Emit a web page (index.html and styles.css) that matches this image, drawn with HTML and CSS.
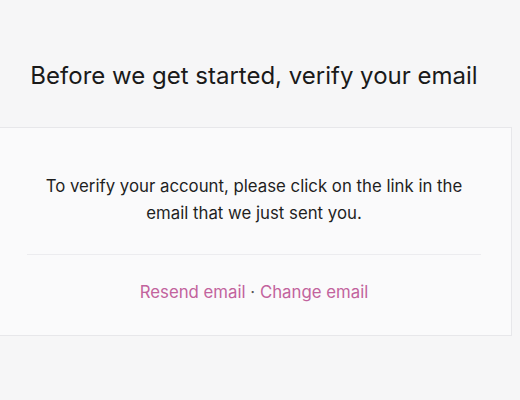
FILE: index.html
```html
<!DOCTYPE html>
<html lang="en">
<head>
<meta charset="utf-8">
<link rel="stylesheet" href="styles.css">
</head>
<body>
<main class="page">
  <h1 class="title">Before we get started, verify your email</h1>
  <section class="card">
    <p class="message">To verify your account, please click on the link in the<br>email that we just sent you.</p>
    <hr class="divider">
    <p class="actions"><a class="link" href="#">Resend email</a> · <a class="link" href="#">Change email</a></p>
  </section>
</main>
</body>
</html>
```
FILE: styles.css
```css
html, body {
  margin: 0;
  padding: 0;
  background: #f6f6f7;
}
body {
  font-family: Inter, "Liberation Sans", sans-serif;
  color: #1e1e1e;
  width: 520px;
  height: 400px;
  overflow: hidden;
}
.page {
  padding-top: 60px;
  width: 516px;
  margin-left: -4px;
}
.title {
  margin: 0 0 35px;
  font-size: 24px;
  line-height: 32px;
  font-weight: 400;
  text-align: center;
  color: #1a1a1a;
}
.card {
  background: #fafafb;
  border: 1px solid #e7e7ea;
  padding: 45px 0 29px;
  text-align: center;
}
.message {
  margin: 0;
  font-size: 16.8px;
  line-height: 27px;
  color: #1f1f1f;
}
.divider {
  border: 0;
  border-top: 1px solid #ececef;
  margin: 27px 30px 24px;
}
.actions {
  margin: 0;
  font-size: 16.8px;
  line-height: 27px;
  color: #555;
}
.link {
  color: #c2639d;
  text-decoration: none;
}
```
